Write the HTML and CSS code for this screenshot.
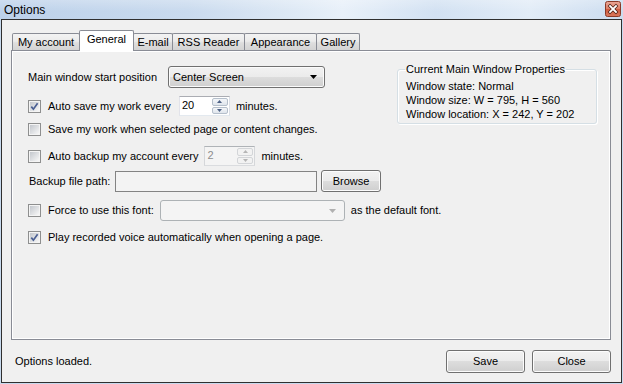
FILE: index.html
```html
<!DOCTYPE html>
<html>
<head>
<meta charset="utf-8">
<title>Options</title>
<link rel="stylesheet" href="styles.css">
</head>
<body>
<svg class="defs" width="0" height="0" aria-hidden="true">
  <defs>
    <linearGradient id="cbg" x1="0" y1="0" x2="1" y2="1">
      <stop offset="0" stop-color="#c3c7cd"/>
      <stop offset="1" stop-color="#f7f7f7"/>
    </linearGradient>
    <linearGradient id="closeg" x1="0" y1="0" x2="0" y2="1">
      <stop offset="0" stop-color="#eaa797"/>
      <stop offset="0.5" stop-color="#dc7e66"/>
      <stop offset="0.5" stop-color="#cf5a3e"/>
      <stop offset="1" stop-color="#d9785c"/>
    </linearGradient>
  </defs>
</svg>

<div class="titlebar">
  <span class="title">Options</span>
  <svg class="close-btn" width="16" height="16" viewBox="0 0 16 16">
    <rect x="0.5" y="0.5" width="15" height="15" rx="2" fill="url(#closeg)" stroke="#8a3a28"/>
    <path d="M5 5 L11 11 M11 5 L5 11" stroke="#4a1d12" stroke-width="3.2" stroke-linecap="square"/>
    <path d="M5 5 L11 11 M11 5 L5 11" stroke="#ffffff" stroke-width="1.8" stroke-linecap="square"/>
  </svg>
</div>

<div class="window">
  <div class="tabstrip">
    <div class="tab tab-myaccount">My account</div>
    <div class="tab tab-general active">General</div>
    <div class="tab tab-email">E-mail</div>
    <div class="tab tab-rss">RSS Reader</div>
    <div class="tab tab-appearance">Appearance</div>
    <div class="tab tab-gallery">Gallery</div>
  </div>

  <div class="panel">
    <div class="form">
      <div class="row row-a">
        <span class="label label-pos">Main window start position</span>
        <div class="combo">
          <span class="combo-text">Center Screen</span>
          <svg class="combo-arrow" width="7" height="4" viewBox="0 0 7 4"><path d="M0 0 H7 L3.5 4 Z" fill="#000"/></svg>
        </div>
      </div>

      <div class="row row-b">
        <svg class="cb" width="13" height="13" viewBox="0 0 13 13">
          <rect x="0.5" y="0.5" width="12" height="12" fill="#f4f4f4" stroke="#8e8f8f"/>
          <rect x="2" y="2" width="9" height="9" fill="url(#cbg)"/>
          <path d="M3.3 6.6 L5.4 9.2 L9.6 3.2" fill="none" stroke="#4a5f93" stroke-width="1.7"/>
        </svg>
        <span class="cb-text">Auto save my work every</span>
        <div class="spin">
          <span class="spin-val">20</span>
          <span class="spin-btns">
            <span class="spin-b"><svg width="5" height="3" viewBox="0 0 5 3"><path d="M0 3 H5 L2.5 0 Z" fill="#4d6185"/></svg></span>
            <span class="spin-b"><svg width="5" height="3" viewBox="0 0 5 3"><path d="M0 0 H5 L2.5 3 Z" fill="#4d6185"/></svg></span>
          </span>
        </div>
        <span class="after">minutes.</span>
      </div>

      <div class="row row-c">
        <svg class="cb" width="13" height="13" viewBox="0 0 13 13">
          <rect x="0.5" y="0.5" width="12" height="12" fill="#f4f4f4" stroke="#8e8f8f"/>
          <rect x="2" y="2" width="9" height="9" fill="url(#cbg)"/>
        </svg>
        <span class="cb-text">Save my work when selected page or content changes.</span>
      </div>

      <div class="row row-d">
        <svg class="cb" width="13" height="13" viewBox="0 0 13 13">
          <rect x="0.5" y="0.5" width="12" height="12" fill="#f4f4f4" stroke="#8e8f8f"/>
          <rect x="2" y="2" width="9" height="9" fill="url(#cbg)"/>
        </svg>
        <span class="cb-text">Auto backup my account every</span>
        <div class="spin disabled">
          <span class="spin-val">2</span>
          <span class="spin-btns">
            <span class="spin-b"><svg width="5" height="3" viewBox="0 0 5 3"><path d="M0 3 H5 L2.5 0 Z" fill="#b5b5b5"/></svg></span>
            <span class="spin-b"><svg width="5" height="3" viewBox="0 0 5 3"><path d="M0 0 H5 L2.5 3 Z" fill="#b5b5b5"/></svg></span>
          </span>
        </div>
        <span class="after">minutes.</span>
      </div>

      <div class="row row-e">
        <span class="label label-path">Backup file path:</span>
        <div class="textbox"></div>
        <button class="btn btn-browse">Browse</button>
      </div>

      <div class="row row-f">
        <svg class="cb" width="13" height="13" viewBox="0 0 13 13">
          <rect x="0.5" y="0.5" width="12" height="12" fill="#f4f4f4" stroke="#8e8f8f"/>
          <rect x="2" y="2" width="9" height="9" fill="url(#cbg)"/>
        </svg>
        <span class="cb-text">Force to use this font:</span>
        <div class="combo disabled">
          <span class="combo-text"></span>
          <svg class="combo-arrow" width="7" height="4" viewBox="0 0 7 4"><path d="M0 0 H7 L3.5 4 Z" fill="#b0b0b0"/></svg>
        </div>
        <span class="after">as the default font.</span>
      </div>

      <div class="row row-g">
        <svg class="cb" width="13" height="13" viewBox="0 0 13 13">
          <rect x="0.5" y="0.5" width="12" height="12" fill="#f4f4f4" stroke="#8e8f8f"/>
          <rect x="2" y="2" width="9" height="9" fill="url(#cbg)"/>
          <path d="M3.3 6.6 L5.4 9.2 L9.6 3.2" fill="none" stroke="#4a5f93" stroke-width="1.7"/>
        </svg>
        <span class="cb-text">Play recorded voice automatically when opening a page.</span>
      </div>
    </div>

    <fieldset class="group">
      <legend>Current Main Window Properties</legend>
      <div class="prop">Window state: Normal</div>
      <div class="prop">Window size: W = 795, H = 560</div>
      <div class="prop">Window location: X = 242, Y = 202</div>
    </fieldset>
  </div>

  <div class="footer">
    <span class="status">Options loaded.</span>
    <div class="buttons">
      <button class="btn btn-dialog">Save</button>
      <button class="btn btn-dialog">Close</button>
    </div>
  </div>
</div>
</body>
</html>
```

FILE: styles.css
```css
html, body {
  margin: 0;
  padding: 0;
}

body {
  width: 623px;
  height: 384px;
  overflow: hidden;
  background: #c8daee;
  font-family: "Liberation Sans", Arial, sans-serif;
  font-size: 11px;
  color: #000;
}

.defs {
  display: block;
  width: 0;
  height: 0;
  overflow: hidden;
}

.titlebar {
  height: 19px;
  display: flex;
  align-items: center;
  justify-content: space-between;
  padding: 0 2px 0 4px;
  background:
    linear-gradient(to bottom, rgba(255,255,255,0.25), rgba(255,255,255,0) 60%),
    linear-gradient(to right, #bcd1ea 0%, #c9daee 30%, #dbe7f4 45%, #e8f0f9 55%, #d2e1f2 70%, #e2ecf7 85%, #cbdcef 100%);
}

.title {
  font-size: 12px;
  line-height: 14px;
  color: #000;
}

.close-btn {
  display: block;
  margin-top: -1px;
}

.window {
  margin-left: 1px;
  width: 621px;
  height: 364px;
  box-sizing: border-box;
  border: 1px solid #2f2f2f;
  background: #f0f0f0;
  display: flex;
  flex-direction: column;
}

/* Tabs */
.tabstrip {
  height: 30px;
  flex: none;
  display: flex;
  align-items: flex-end;
  padding-left: 10px;
}

.tab {
  box-sizing: border-box;
  height: 17px;
  margin-left: -1px;
  border: 1px solid #898c95;
  border-bottom: none;
  border-radius: 2px 2px 0 0;
  background: linear-gradient(to bottom, #f3f3f3 0%, #ebebeb 45%, #dedede 55%, #d3d3d3 100%);
  text-align: center;
  line-height: 16px;
  white-space: nowrap;
}

.tab:first-child {
  margin-left: 0;
}

.tab.active {
  position: relative;
  z-index: 1;
  height: 21px;
  margin-bottom: -1px;
  background: #fff;
  line-height: 17px;
}

.tab-myaccount { width: 68px; }
.tab-general { width: 55px; }
.tab-email { width: 40px; }
.tab-rss { width: 73px; }
.tab-appearance { width: 73px; }
.tab-gallery { width: 44px; }

.panel {
  flex: none;
  height: 290px;
  margin: 0 10px 0 9px;
  box-sizing: border-box;
  border: 1px solid #898c95;
  box-shadow: inset 1px 1px 0 #ffffff, inset -1px -1px 0 #ffffff;
  background: #f0f0f0;
  padding: 12px 13px 0 16px;
  display: flex;
  justify-content: space-between;
  align-items: flex-start;
}

.form {
  flex: 1;
  min-width: 0;
  display: flex;
  flex-direction: column;
  padding-top: 3px;
}

.row {
  display: flex;
  align-items: center;
  white-space: nowrap;
  line-height: 13px;
}

.row-a { height: 22px; }
.row-b { height: 20px; margin-top: 8px; }
.row-c { height: 20px; margin-top: 3px; }
.row-d { height: 20px; margin-top: 7px; }
.row-e { height: 22px; margin-top: 4px; }
.row-f { height: 21px; margin-top: 8px; }
.row-g { height: 20px; margin-top: 6px; }

.label-pos { width: 140px; flex: none; }
.label-path { width: 86px; flex: none; padding-left: 1px; }

.cb {
  display: block;
  flex: none;
}

.cb-text {
  margin-left: 7px;
  flex: none;
}

.after {
  margin-left: 6px;
  flex: none;
}

/* Combo box */
.combo {
  flex: none;
  box-sizing: border-box;
  width: 157px;
  height: 22px;
  border: 1px solid #707070;
  border-radius: 3px;
  background: linear-gradient(to bottom, #f2f2f2 0%, #ebebeb 50%, #dddddd 50%, #cfcfcf 100%);
  box-shadow: inset 0 0 0 1px #fbfbfb;
  display: flex;
  align-items: center;
  justify-content: space-between;
  padding: 0 7px 0 4px;
}

.combo.disabled {
  width: 185px;
  height: 21px;
  margin-left: 6px;
  border-color: #adb2b5;
  background: #f4f4f4;
  box-shadow: none;
  padding-right: 8px;
}

.combo-arrow {
  display: block;
}

/* Numeric up/down */
.spin {
  flex: none;
  box-sizing: border-box;
  width: 51px;
  height: 20px;
  margin-left: 8px;
  border: 1px solid #abadb3;
  border-color: #abadb3 #dbdfe6 #e3e9ef #e2e3ea;
  background: #fff;
  display: flex;
  justify-content: space-between;
}

.spin.disabled {
  margin-left: 6px;
  border-color: #afb3b7 #d5d7da #dadcdf #d5d7da;
  background: #f4f4f4;
  color: #8d8d8d;
}

.spin-val {
  padding-left: 2px;
  line-height: 17px;
}

.spin-btns {
  width: 16px;
  display: flex;
  flex-direction: column;
  padding: 1px 1px 1px 0;
  gap: 1px;
}

.spin-b {
  flex: 1;
  box-sizing: border-box;
  border: 1px solid #b5bfcb;
  border-radius: 2px;
  background: linear-gradient(to bottom, #f4f6f9, #dfe5ec);
  display: flex;
  align-items: center;
  justify-content: center;
}

.spin.disabled .spin-b {
  border-color: #d3d5d8;
  background: #f2f2f2;
}

.spin-b svg {
  display: block;
}

/* Text box */
.textbox {
  flex: none;
  box-sizing: border-box;
  width: 202px;
  height: 21px;
  border: 1px solid #838383;
  background: #f3f3f3;
}

/* Buttons */
.btn {
  box-sizing: border-box;
  border: 1px solid #707070;
  border-radius: 3px;
  background: linear-gradient(to bottom, #f2f2f2 0%, #ebebeb 50%, #dddddd 50%, #cfcfcf 100%);
  box-shadow: inset 0 0 0 1px #fcfcfc;
  font-family: "Liberation Sans", Arial, sans-serif;
  font-size: 11px;
  color: #000;
  padding: 0;
  margin: 0;
  line-height: 13px;
}

.btn-browse {
  flex: none;
  width: 60px;
  height: 22px;
  margin-left: 4px;
}

/* Group box */
.group {
  flex: none;
  box-sizing: border-box;
  width: 200px;
  margin: 0;
  min-width: 0;
  border: 1px solid #d5dfe5;
  border-radius: 3px;
  box-shadow: inset 1px 1px 0 #ffffff, 1px 1px 0 #ffffff;
  padding: 3px 7px 2px 7px;
  white-space: nowrap;
}

.group legend {
  padding: 0 1px;
  line-height: 13px;
}

.prop {
  padding-left: 1px;
  line-height: 14px;
}

/* Footer */
.footer {
  flex: 1;
  display: flex;
  justify-content: space-between;
  align-items: flex-start;
  padding: 10px 10px 0 13px;
}

.status {
  line-height: 23px;
}

.buttons {
  display: flex;
  gap: 7px;
}

.btn-dialog {
  width: 79px;
  height: 23px;
}
```
